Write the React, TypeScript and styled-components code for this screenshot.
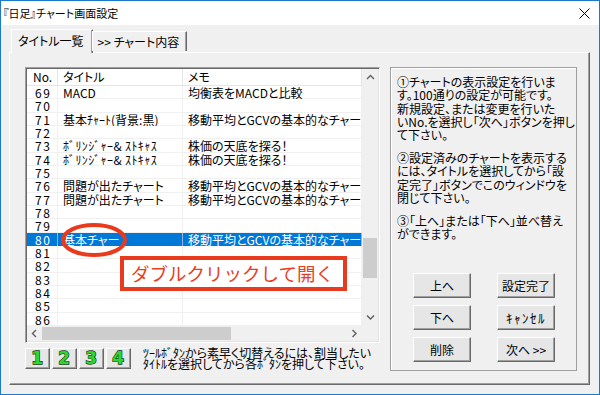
import styled, { createGlobalStyle } from "styled-components";

const GlobalStyle = createGlobalStyle`
  html, body {
    margin: 0;
    padding: 0;
    background: #fff;
  }
  body {
    font-family: "Noto Sans CJK JP", "Noto Sans", sans-serif;
    font-feature-settings: "palt";
    color: #000;
  }
  * {
    box-sizing: border-box;
  }
`;

const Window = styled.div`
  width: 600px;
  height: 395px;
  border: 1px solid #1979ca;
  background: #f0f0f0;
  display: flex;
  flex-direction: column;
  overflow: hidden;
`;

const TitleBar = styled.div`
  height: 24px;
  flex: none;
  background: #fff;
  display: flex;
  align-items: center;
  justify-content: space-between;
  padding: 0 9px 0 2px;
  font-size: 11px;
  line-height: 24px;
`;

const CloseIcon = styled.svg`
  width: 11px;
  height: 11px;
`;

const Body = styled.div`
  flex: 1;
  display: flex;
  flex-direction: column;
  padding: 5px 9px 9px 8px;
`;

const TabStrip = styled.div`
  height: 22px;
  flex: none;
  display: flex;
  align-items: flex-end;
  padding-left: 2px;
  position: relative;
  z-index: 1;
`;

const Tab = styled.div<{ $active?: boolean }>`
  height: ${(p) => (p.$active ? "24px" : "20px")};
  margin-bottom: ${(p) => (p.$active ? "-1px" : "1px")};
  padding: ${(p) => (p.$active ? "3px 8px 0 6px" : "2px 7px 0 5px")};
  margin-left: ${(p) => (p.$active ? "0" : "-1px")};
  background: #f0f0f0;
  border-top: 1px solid #fff;
  border-left: 1px solid #fff;
  border-right: 1px solid #696969;
  box-shadow: inset -1px 0 0 #a0a0a0;
  font-size: 12px;
  line-height: 16px;
  white-space: nowrap;
`;

const TabPanel = styled.div`
  flex: 1;
  display: flex;
  gap: 10px;
  padding: 14px 12px 0 15px;
  border-top: 1px solid #fff;
  border-left: 1px solid #fff;
  border-right: 1px solid #696969;
  border-bottom: 1px solid #696969;
  box-shadow: inset -1px -1px 0 #a0a0a0;
`;

const LeftColumn = styled.div`
  width: 355px;
  display: flex;
  flex-direction: column;
`;

const ListView = styled.div`
  position: relative;
  height: 276px;
  background: #fff;
  border: 1px solid;
  border-color: #a0a0a0 #fff #fff #a0a0a0;
  box-shadow: inset 1px 1px 0 #696969, inset -1px -1px 0 #e3e3e3;
  padding: 1px;
  display: grid;
  grid-template-columns: 1fr 16px;
  grid-template-rows: 1fr 15px;
`;

const Table = styled.div`
  overflow: hidden;
  font-size: 12px;
`;

const HeaderRow = styled.div`
  display: grid;
  grid-template-columns: 31px 125px 1fr;
  height: 17px;
  border-bottom: 1px solid #e5e5e5;
`;

const HeaderCell = styled.div<{ $pad: number }>`
  padding-left: ${(p) => p.$pad}px;
  line-height: 16px;
  border-right: 1px solid #e5e5e5;
  white-space: nowrap;
  overflow: hidden;
`;

const Row = styled.div<{ $selected?: boolean }>`
  display: grid;
  grid-template-columns: 31px 125px 1fr;
  height: 13.333px;
  background: ${(p) => (p.$selected ? "#0078d7" : "#fff")};
  color: ${(p) => (p.$selected ? "#fff" : "#000")};
  box-shadow: inset 0 -1px 0 ${(p) => (p.$selected ? "#0078d7" : "#f0f0f0")};
`;

const Cell = styled.div<{ $pad: number; $selected?: boolean; $spread?: number }>`
  padding-left: ${(p) => p.$pad}px;
  letter-spacing: ${(p) => p.$spread ?? 0}px;
  line-height: 13px;
  white-space: nowrap;
  overflow: hidden;
  border-right: 1px solid ${(p) => (p.$selected ? "#8ab9e4" : "#f0f0f0")};
`;

const VScroll = styled.div`
  background: #f0f0f0;
  display: flex;
  flex-direction: column;
`;

const HScroll = styled.div`
  background: #f0f0f0;
  display: flex;
`;

const Corner = styled.div`
  background: #f0f0f0;
`;

const ArrowBox = styled.div<{ $vertical?: boolean }>`
  flex: none;
  width: ${(p) => (p.$vertical ? "16px" : "15px")};
  height: ${(p) => (p.$vertical ? "17px" : "15px")};
  display: flex;
  align-items: center;
  justify-content: center;
`;

const Track = styled.div<{ $vertical?: boolean }>`
  flex: 1;
  display: flex;
  flex-direction: ${(p) => (p.$vertical ? "column" : "row")};
`;

const Thumb = styled.div<{ $vertical?: boolean }>`
  flex: none;
  background: #cdcdcd;
  ${(p) => (p.$vertical ? "margin: 0 1px;" : "margin: 1px 0;")}
`;

const Annotations = styled.div`
  position: absolute;
  inset: 1px;
  pointer-events: none;
`;

const Ring = styled.svg`
  position: absolute;
  left: 33px;
  top: 153px;
  width: 68px;
  height: 36px;
`;

const Callout = styled.div`
  position: absolute;
  left: 93px;
  top: 187px;
  width: 227px;
  height: 35px;
  border: 4px solid #ea3a1e;
  background: #fff;
  color: #e8401f;
  font-size: 18.5px;
  font-feature-settings: normal;
  line-height: 26px;
  padding-left: 7px;
  white-space: nowrap;
`;

const Toolbar = styled.div`
  display: flex;
  align-items: center;
  gap: 2.5px;
  margin-top: 4px;
`;

const NumButton = styled.div`
  width: 24.5px;
  height: 21px;
  background: #e6e6e6;
  border: 1px solid;
  border-color: #fff #696969 #696969 #fff;
  box-shadow: inset -1px -1px 0 #a0a0a0;
  display: flex;
  align-items: center;
  justify-content: center;
  font-family: "DejaVu Sans", "Liberation Sans", sans-serif;
  font-weight: bold;
  font-size: 17px;
  color: #2fd62f;
  -webkit-text-stroke: 1.3px #0c3f0c;
  paint-order: stroke fill;
`;

const Hint = styled.div`
  margin-left: 10px;
  font-size: 12px;
  line-height: 11px;
  white-space: nowrap;
`;

const InfoBox = styled.div`
  width: 187px;
  height: 304px;
  border: 1px solid #a0a0a0;
  box-shadow: inset 1px 1px 0 #fff;
  display: flex;
  flex-direction: column;
  justify-content: space-between;
  padding: 7px 0 8px 6px;
`;

const Guide = styled.div`
  font-size: 12px;
  line-height: 13.3px;
`;

const Para = styled.p`
  margin: 0 0 9.5px;
  white-space: nowrap;
`;

const ButtonGrid = styled.div`
  display: grid;
  grid-template-columns: 58px 58px;
  column-gap: 26px;
  row-gap: 7px;
  margin-left: 16px;
`;

const PushButton = styled.div<{ $narrow?: boolean }>`
  height: 25px;
  background: #e6e6e6;
  border: 1px solid;
  border-color: #fff #696969 #696969 #fff;
  box-shadow: inset -1px -1px 0 #a0a0a0;
  display: flex;
  align-items: center;
  justify-content: center;
  font-size: ${(p) => (p.$narrow ? "13px" : "12px")};
  letter-spacing: ${(p) => (p.$narrow ? "1.5px" : "0")};
  font-feature-settings: ${(p) => (p.$narrow ? "normal" : "\"palt\"")};
  white-space: nowrap;
`;

type Item = { no: number; title?: string; memo?: string; selected?: boolean };

const GCV = "移動平均とGCVの基本的なチャート";
const TENZOKO = "株価の天底を探る！";
const BOLLINGER = "ﾎﾞﾘﾝｼﾞｬｰ& ｽﾄｷｬｽ";

const items: Item[] = [
  { no: 69, title: "MACD", memo: "均衡表をMACDと比較" },
  { no: 70 },
  { no: 71, title: "基本ﾁｬｰﾄ(背景:黒)", memo: GCV },
  { no: 72 },
  { no: 73, title: BOLLINGER, memo: TENZOKO },
  { no: 74, title: BOLLINGER, memo: TENZOKO },
  { no: 75 },
  { no: 76, title: "問題が出たチャート", memo: GCV },
  { no: 77, title: "問題が出たチャート", memo: GCV },
  { no: 78 },
  { no: 79 },
  { no: 80, title: "基本チャー", memo: GCV, selected: true },
  { no: 81 },
  { no: 82 },
  { no: 83 },
  { no: 84 },
  { no: 85 },
  { no: 86 },
];

// scroll position: rows 69-86 of 100, first column block of a wider sheet
const TOTAL_ROWS = 100;
const V_TRACK = 223;
const H_TRACK = 305;
const vThumb = Math.round((V_TRACK * items.length) / TOTAL_ROWS);
const vOffset = Math.round(((items[0].no - 1) / (TOTAL_ROWS - items.length)) * (V_TRACK - vThumb));
const hThumb = Math.round(H_TRACK * 0.62);

function Chevron({ dir }: { dir: "up" | "down" | "left" | "right" }) {
  const pts = {
    up: "1,5 4.5,1.5 8,5",
    down: "1,1.5 4.5,5 8,1.5",
    left: "5,1 1.5,4.5 5,8",
    right: "1.5,1 5,4.5 1.5,8",
  }[dir];
  const vertical = dir === "up" || dir === "down";
  return (
    <svg width={vertical ? 9 : 7} height={vertical ? 7 : 9}>
      <polyline points={pts} fill="none" stroke="#606060" strokeWidth="1.4" />
    </svg>
  );
}

export default function App() {
  return (
    <>
      <GlobalStyle />
      <Window>
        <TitleBar>
          <span>『日足』チャート画面設定</span>
          <CloseIcon viewBox="0 0 11 11">
            <path d="M0.5 0.5 L10.5 10.5 M10.5 0.5 L0.5 10.5" stroke="#000" strokeWidth="1" />
          </CloseIcon>
        </TitleBar>

        <Body>
          <TabStrip>
            <Tab $active>タイトル一覧</Tab>
            <Tab>&gt;&gt; チャート内容</Tab>
          </TabStrip>

          <TabPanel>
            <LeftColumn>
              <ListView>
                <Table>
                  <HeaderRow>
                    <HeaderCell $pad={6}>No.</HeaderCell>
                    <HeaderCell $pad={5}>タイトル</HeaderCell>
                    <HeaderCell $pad={5}>メモ</HeaderCell>
                  </HeaderRow>
                  {items.map((it) => (
                    <Row key={it.no} $selected={it.selected}>
                      <Cell $pad={8} $spread={1.5} $selected={it.selected}>{it.no}</Cell>
                      <Cell $pad={5} $spread={it.title === BOLLINGER ? 0.4 : 0} $selected={it.selected}>
                        {it.title}
                      </Cell>
                      <Cell $pad={5} $selected={it.selected}>{it.memo}</Cell>
                    </Row>
                  ))}
                </Table>

                <VScroll>
                  <ArrowBox $vertical>
                    <Chevron dir="up" />
                  </ArrowBox>
                  <Track $vertical>
                    <div style={{ height: vOffset }} />
                    <Thumb $vertical style={{ height: vThumb }} />
                  </Track>
                  <ArrowBox $vertical>
                    <Chevron dir="down" />
                  </ArrowBox>
                </VScroll>

                <HScroll>
                  <ArrowBox>
                    <Chevron dir="left" />
                  </ArrowBox>
                  <Track>
                    <Thumb style={{ width: hThumb }} />
                  </Track>
                  <ArrowBox>
                    <Chevron dir="right" />
                  </ArrowBox>
                </HScroll>
                <Corner />

                <Annotations>
                  <Ring viewBox="0 0 68 36">
                    <ellipse cx="34" cy="18" rx="31" ry="15" fill="none" stroke="#ea3a1e" strokeWidth="4" />
                  </Ring>
                  <Callout>ダブルクリックして開く</Callout>
                </Annotations>
              </ListView>

              <Toolbar>
                <NumButton>1</NumButton>
                <NumButton>2</NumButton>
                <NumButton>3</NumButton>
                <NumButton>4</NumButton>
                <Hint>
                  ﾂｰﾙﾎﾞﾀﾝから素早く切替えるには、割当したい
                  <br />
                  ﾀｲﾄﾙを選択してから各ﾎﾞﾀﾝを押して下さい。
                </Hint>
              </Toolbar>
            </LeftColumn>

            <InfoBox>
              <Guide>
                <Para>
                  ①チャートの表示設定を行いま
                  <br />
                  す。100通りの設定が可能です。
                  <br />
                  新規設定、または変更を行いた
                  <br />
                  いNo.を選択し「次へ」ボタンを押し
                  <br />
                  て下さい。
                </Para>
                <Para>
                  ②設定済みのチャートを表示する
                  <br />
                  には、タイトルを選択してから「設
                  <br />
                  定完了」ボタンでこのウィンドウを
                  <br />
                  閉じて下さい。
                </Para>
                <Para>
                  ③「上へ」または「下へ」並べ替え
                  <br />
                  ができます。
                </Para>
              </Guide>

              <ButtonGrid>
                <PushButton>上へ</PushButton>
                <PushButton>設定完了</PushButton>
                <PushButton>下へ</PushButton>
                <PushButton $narrow>ｷｬﾝｾﾙ</PushButton>
                <PushButton>削除</PushButton>
                <PushButton>次へ &gt;&gt;</PushButton>
              </ButtonGrid>
            </InfoBox>
          </TabPanel>
        </Body>
      </Window>
    </>
  );
}
